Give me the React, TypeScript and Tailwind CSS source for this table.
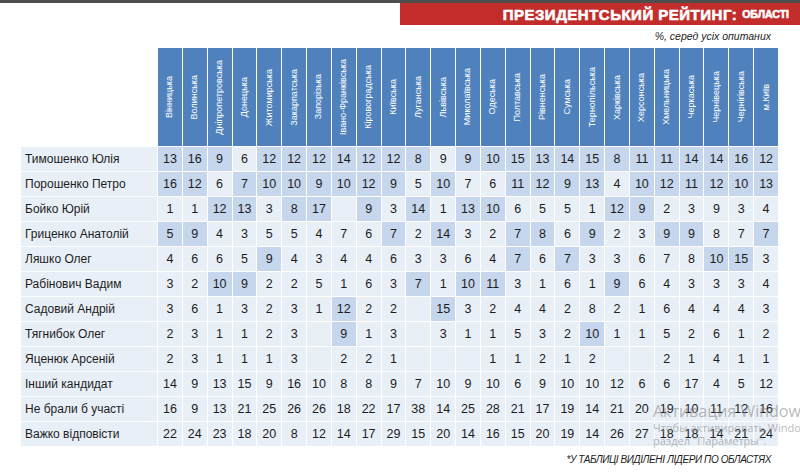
import React from "react";

const regions = [
  "Вінницька",
  "Волинська",
  "Дніпропетровська",
  "Донецька",
  "Житомирська",
  "Закарпатська",
  "Запорізька",
  "Івано-Франківська",
  "Кіровоградська",
  "Київська",
  "Луганська",
  "Львівська",
  "Миколаївська",
  "Одеська",
  "Полтавська",
  "Рівненська",
  "Сумська",
  "Тернопільська",
  "Харківська",
  "Херсонська",
  "Хмельницька",
  "Черкаська",
  "Чернівецька",
  "Чернігівська",
  "м.Київ",
];

type Row = { name: string; values: (number | null)[] };

const _ = null;

const rows: Row[] = [
  { name: "Тимошенко Юлія", values: [13, 16, 9, 6, 12, 12, 12, 14, 12, 12, 8, 9, 9, 10, 15, 13, 14, 15, 8, 11, 11, 14, 14, 16, 12] },
  { name: "Порошенко Петро", values: [16, 12, 6, 7, 10, 10, 9, 10, 12, 9, 5, 10, 7, 6, 11, 12, 9, 13, 4, 10, 12, 11, 12, 10, 13] },
  { name: "Бойко Юрій", values: [1, 1, 12, 13, 3, 8, 17, _, 9, 3, 14, 1, 13, 10, 6, 5, 5, 1, 12, 9, 2, 3, 9, 3, 4] },
  { name: "Гриценко Анатолій", values: [5, 9, 4, 3, 5, 5, 4, 7, 6, 7, 2, 14, 3, 2, 7, 8, 6, 9, 2, 3, 9, 9, 8, 7, 7] },
  { name: "Ляшко Олег", values: [4, 6, 6, 5, 9, 4, 3, 4, 4, 6, 3, 3, 6, 4, 7, 6, 7, 3, 3, 6, 7, 8, 10, 15, 3] },
  { name: "Рабінович Вадим", values: [3, 2, 10, 9, 2, 2, 5, 1, 6, 3, 7, 1, 10, 11, 3, 1, 6, 1, 9, 6, 4, 3, 3, 3, 4] },
  { name: "Садовий Андрій", values: [3, 6, 1, 3, 2, 3, 1, 12, 2, 2, _, 15, 3, 2, 4, 4, 2, 8, 2, 1, 6, 4, 4, 4, 3] },
  { name: "Тягнибок Олег", values: [2, 3, 1, 1, 2, 3, _, 9, 1, 3, _, 3, 1, 1, 5, 3, 2, 10, 1, 1, 5, 2, 6, 1, 2] },
  { name: "Яценюк Арсеній", values: [2, 3, 1, 1, 1, 3, _, 2, 2, 1, _, _, _, 1, 1, 2, 1, 2, _, _, 2, 1, 4, 1, 1] },
  { name: "Інший кандидат", values: [14, 9, 13, 15, 9, 16, 10, 8, 8, 9, 7, 10, 9, 10, 6, 9, 10, 10, 12, 6, 6, 17, 4, 5, 12] },
  { name: "Не брали б участі", values: [16, 9, 13, 21, 25, 26, 26, 18, 22, 17, 38, 14, 25, 28, 21, 17, 19, 14, 21, 20, 19, 10, 11, 12, 16] },
  { name: "Важко відповісти", values: [22, 24, 23, 18, 20, 8, 12, 14, 17, 29, 15, 20, 14, 16, 15, 20, 19, 14, 26, 27, 18, 18, 14, 21, 24] },
];

// leaders: top three candidates in each region, plus two close fourth places
const CANDIDATES = 9;
const extra = new Set(["7-7", "3-17"]);

const isLeader = (r: number, c: number) => {
  if (r >= CANDIDATES) return false;
  const v = rows[r].values[c];
  if (v == null) return false;
  if (extra.has(`${r}-${c}`)) return true;
  const sorted = rows
    .slice(0, CANDIDATES)
    .map((row) => row.values[c] ?? 0)
    .sort((a, b) => b - a);
  return v >= sorted[2];
};

export default function App() {
  return (
    <div className="relative w-[800px] h-[475px] overflow-hidden bg-white font-['Liberation_Sans',Arial,sans-serif] text-[#1d1d1d]">
      <div className="h-[3px] bg-[#4e4e4e]" />
      <div className="flex justify-end">
        <div className="w-[400px] h-[22px] bg-[#c22d2b] flex items-center justify-end pr-[11px] text-white font-black [-webkit-text-stroke:0.6px_white]">
          <span className="text-[15px] leading-none tracking-[0.5px]">ПРЕЗИДЕНТСЬКИЙ РЕЙТИНГ:</span>
          <span className="ml-[5px] text-[10.5px] leading-none">ОБЛАСТІ</span>
        </div>
      </div>
      <div className="h-[14px] mt-[4px] pr-[29px] flex justify-end items-center text-[10.5px] italic leading-none">
        %, серед усіх опитаних
      </div>

      <div className="ml-[21px] mt-[5px] w-[757px] grid grid-cols-[136px_repeat(25,minmax(0,1fr))] gap-px">
        <div className="h-[98px]" />
        {regions.map((reg) => (
          <div key={reg} className="h-[98px] bg-[#4f81bd] flex items-center justify-center">
            <span className="[writing-mode:vertical-rl] rotate-180 text-[9px] leading-none text-white whitespace-nowrap">
              {reg}
            </span>
          </div>
        ))}

        {rows.map((row, r) => (
          <React.Fragment key={row.name}>
            <div className="h-[24px] bg-[#e9eff7] flex items-center pl-[4px] text-[12px] whitespace-nowrap">
              {row.name}
            </div>
            {row.values.map((v, c) => (
              <div
                key={c}
                className={
                  isLeader(r, c)
                    ? "h-[24px] bg-[#c6d6ec] flex items-center justify-center text-[12.5px]"
                    : "h-[24px] bg-[#e9eff7] flex items-center justify-center text-[12.5px]"
                }
              >
                {v ?? ""}
              </div>
            ))}
          </React.Fragment>
        ))}
      </div>

      <div className="mt-[8px] pr-[29px] flex justify-end text-[10px] italic leading-[12px] tracking-[-0.4px]">
        *У ТАБЛИЦІ ВИДІЛЕНІ ЛІДЕРИ ПО ОБЛАСТЯХ
      </div>

      {/* windows activation watermark */}
      <div className="absolute left-[653px] top-[401px] whitespace-nowrap font-['Open_Sans',sans-serif] text-[#8a8a8a]/60 pointer-events-none">
        <div className="text-[16px] leading-[20px]">Активация Windows</div>
        <div className="text-[11px] leading-[13px]">Чтобы активировать Windows, перейдите в</div>
        <div className="text-[11px] leading-[13px]">раздел "Параметры".</div>
      </div>
    </div>
  );
}
